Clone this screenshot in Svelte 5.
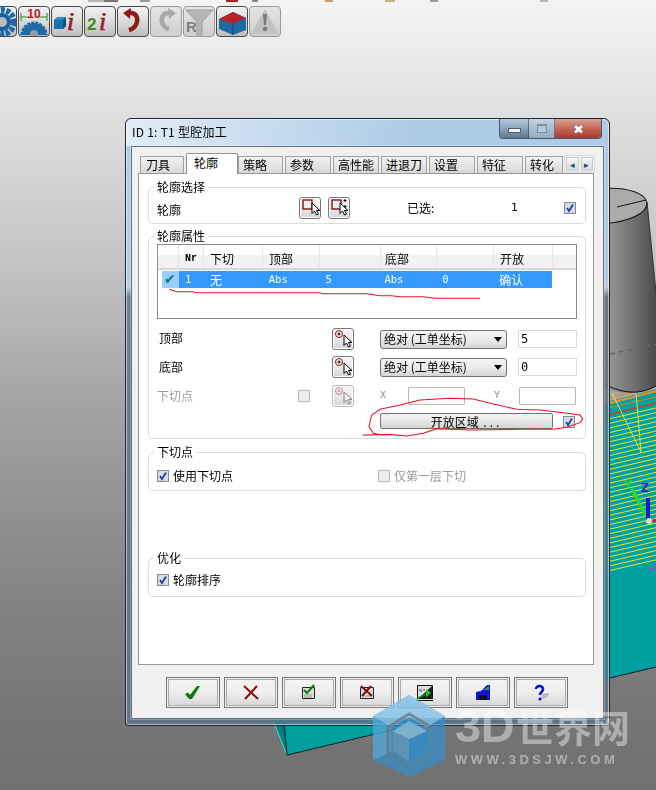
<script>
  const tabs = [
    { t: '刀具', w: 44 }, { t: '轮廓', w: 52, on: true }, { t: '策略', w: 45 }, { t: '参数', w: 46 },
    { t: '高性能', w: 46 }, { t: '进退刀', w: 46 }, { t: '设置', w: 46 }, { t: '特征', w: 46 }, { t: '转化', w: 38 }
  ];
  const cols = ['', 'Nr', '下切', '顶部', '', '底部', '', '开放', ''];
  const row = ['✔', '1', '无', 'Abs', '5', 'Abs', '0', '确认'];
  const mono = new Set([1, 3, 4, 5, 6]);
  const yLines = Array.from({ length: 34 }, (_, i) => 421 + i * 4.6);
  const topMarks = [
    { x: 88, w: 20, c: '#b8b8b8' }, { x: 104, w: 14, c: '#777' }, { x: 140, w: 10, c: '#999' },
    { x: 226, w: 12, c: '#a82020' }, { x: 252, w: 6, c: '#888' }, { x: 325, w: 8, c: '#c9a060' },
    { x: 385, w: 10, c: '#c9b080' }, { x: 430, w: 8, c: '#999' }, { x: 540, w: 8, c: '#b5b5b5' }
  ];
</script>

{#snippet cursor(x, y, dim)}
  <path d="M{x} {y}l0 10.500l2.500-2.500l2 4l2-1l-2-3.500l3.500 0z" fill={dim ? '#eee' : '#fff'} stroke={dim ? '#888' : '#000'} stroke-width="1"/>
{/snippet}

{#snippet check(on)}
  <svg class="ck" width="12" height="12" viewBox="0 0 12 12">
    <rect x=".5" y=".5" width="11" height="11" fill={on ? '#d5dde8' : '#efefef'} stroke={on ? '#8a8a8a' : '#b5b5b5'}/>
    {#if on}<path d="M3 6l2 3l4-6.500" fill="none" stroke="#2a3f9e" stroke-width="1.800"/>{/if}
  </svg>
{/snippet}

{#snippet point(dim)}
  <button class="pick" class:dim>
    <svg width="20" height="20" viewBox="0 0 20 20">
      <circle cx="6" cy="5" r="3.500" fill="none" stroke={dim ? '#d08a8a' : '#a01010'} stroke-width="1"/>
      <path d="M4.500 5h3M6 3.500v3" stroke={dim ? '#999' : '#000'} stroke-width="1"/>
      {@render cursor(11, 6, dim)}
    </svg>
  </button>
{/snippet}

<div class="scene">
  <svg class="model" width="656" height="790" viewBox="0 0 656 790">
    <defs>
      <linearGradient id="cyl" x1="0" x2="1" y1="0" y2="0">
        <stop offset="0" stop-color="#a8a8a8"/><stop offset=".45" stop-color="#a0a0a0"/><stop offset=".8" stop-color="#6c6c6c"/><stop offset="1" stop-color="#4a4a4a"/>
      </linearGradient>
      <clipPath id="fl"><polygon points="600,418 656,405 656,566 600,581"/></clipPath>
    </defs>
    {#each topMarks as m}<rect x={m.x} y="0" width={m.w} height="2" fill={m.c}/>{/each}
    <polygon points="560,418 656,392 656,667 287,755 272,718" fill="#00a0a0"/>
    <polygon points="272,718 284,722 287,755" fill="#007f80"/>
    <path d="M272 718L287 755" stroke="#30e8e8" stroke-width="1"/>
    <path d="M284 722L287 755L656 667" fill="none" stroke="#062020" stroke-width="1"/>
    <path d="M600 400L656 386M600 406L656 392M600 410L656 397" stroke="#d98a10" stroke-width="1"/>
    <path d="M600 404L656 390" stroke="#7f8f20" stroke-width="1"/>
    <path d="M600 417L656 403" stroke="#c84020" stroke-width="1.500"/>
    <g clip-path="url(#fl)">
      {#each yLines as y}<path d="M600 {y}L656 {y - 13}" stroke="#e8e830" stroke-width="1"/>{/each}
    </g>
    <path d="M612 393L641 452M636 393L641 452" stroke="#e8e040" stroke-width="1" fill="none"/>
    <path d="M650 570L656 567" stroke="#e020e0" stroke-width="1.500"/>
    <path d="M558 200L647 202L656 292V386Q632 400 600 386Z" fill="url(#cyl)"/>
    <path d="M656 386Q632 400 600 382" fill="none" stroke="#111" stroke-width="1"/>
    <path d="M647 202L656 292" stroke="#333" stroke-width="1" fill="none"/>
    <ellipse cx="605" cy="206" rx="42" ry="17.500" transform="rotate(-4 605 206)" fill="#aaa" stroke="#111" stroke-width="1"/>
    <path d="M617 207L646 200" stroke="#111" stroke-width="1"/>
    <path d="M610 354L656 344" stroke="#666" stroke-width="1.500" stroke-dasharray="5 4"/>
    <path d="M632 489L648 520" stroke="#20e020" stroke-width="3"/>
    <path d="M648 498V520" stroke="#1818e0" stroke-width="4"/>
    <path d="M653 520l3 1" stroke="#d02020" stroke-width="3"/>
    <circle cx="649" cy="521" r="3" fill="#ddd"/>
    <text x="624" y="489" class="axis y">Y</text>
    <text x="641" y="492" class="axis z">Z</text>
  </svg>

  <div class="toolbar">
    <div class="tb">
      <svg width="30" height="29" viewBox="0 0 30 29"><circle cx="16" cy="15" r="12" fill="none" stroke="#1d6aa8" stroke-width="6" stroke-dasharray="4 1.500"/><circle cx="16" cy="15" r="9" fill="#1d5f9a"/><circle cx="16" cy="15" r="5" fill="#bbb"/></svg>
    </div>
    <div class="tb">
      <svg width="30" height="29" viewBox="0 0 30 29"><path d="M3 28a12 12 0 0 1 24 0" fill="#1d6aa8" stroke="#1d6aa8" stroke-width="3" stroke-dasharray="3 1"/><circle cx="15" cy="27" r="4" fill="#999"/><path d="M2 10h8M20 10h8M2 6v8M28 6v8" stroke="#20902a" stroke-width="1"/><text x="15" y="11" class="ten">10</text></svg>
    </div>
    <div class="tb">
      <svg width="30" height="29" viewBox="0 0 30 29"><path d="M2 13l3-3h9v9l-3 3H2z" fill="#2a8fd0"/><path d="M2 13h9v9H2z" fill="#1a70b0"/><path d="M11 13l3-3v9l-3 3z" fill="#0f4f88"/><text x="15" y="23" class="ii">i</text></svg>
    </div>
    <div class="tb">
      <svg width="30" height="29" viewBox="0 0 30 29"><text x="2" y="23" class="two">2</text><text x="14" y="23" class="ii">i</text></svg>
    </div>
    <div class="tb">
      <svg width="30" height="29" viewBox="0 0 30 29"><path d="M9 6c9-1 11 4 10 9c-1 4-4 7-8 8" fill="none" stroke="#8f1a1a" stroke-width="4.500"/><path d="M13 1L5 6l7 6z" fill="#8f1a1a"/></svg>
    </div>
    <div class="tb off">
      <svg width="30" height="29" viewBox="0 0 30 29"><path d="M21 6c-9-1-11 4-10 9c1 4 3 6 7 7" fill="none" stroke="#a8a8a8" stroke-width="4.500"/><path d="M17 1l8 5l-7 6z" fill="#a8a8a8"/></svg>
    </div>
    <div class="tb off">
      <svg width="30" height="29" viewBox="0 0 30 29"><path d="M2 3h27L18 15v13h-5V15z" fill="#b5b5b5" stroke="#9f9f9f"/><text x="2" y="25" class="rr">R</text></svg>
    </div>
    <div class="tb">
      <svg width="30" height="29" viewBox="0 0 30 29"><path d="M2 12l14-7l13 6v12l-13 5l-14-6z" fill="#1b6aa5"/><path d="M2 12l14-7l13 6l-13 6z" fill="#b8232a"/><path d="M16 17v11" stroke="#0f4a7c"/></svg>
    </div>
    <div class="tb off">
      <svg width="30" height="29" viewBox="0 0 30 29"><path d="M15 2L29 27H1z" fill="#c2c2c2"/><path d="M13 7h4l-1 11h-2z" fill="#7a7a7a"/><circle cx="15" cy="22" r="2.200" fill="#7a7a7a"/></svg>
    </div>
  </div>

  <section class="window">
    <header class="title">
      <span class="caption">ID 1: T1 型腔加工</span>
      <div class="caps">
        <span class="cap min"><i></i></span>
        <span class="cap max"><i></i></span>
        <span class="cap close">✖</span>
      </div>
    </header>
    <div class="client">
      <div class="tabs">
        {#each tabs as tab}
          <div class="tab" class:on={tab.on} style="width:{tab.w}px">{tab.t}</div>
        {/each}
        <div class="spin"><span>◂</span><span>▸</span></div>
      </div>
      <div class="page">
        <div class="group g1">
          <div class="legend">轮廓选择</div>
          <span class="l1">轮廓</span>
          <button class="pick">
            <svg width="20" height="20" viewBox="0 0 20 20"><rect x="3" y="2" width="9" height="9" fill="none" stroke="#800000" stroke-width="1.300"/>{@render cursor(12, 5)}</svg>
          </button>
          <button class="pick second">
            <svg width="20" height="20" viewBox="0 0 20 20"><rect x="3" y="2" width="9" height="9" fill="none" stroke="#800000" stroke-width="1.300"/><path d="M16 1v3M14.500 2.500h3M16 7v3M14.500 8.500h3" stroke="#000"/>{@render cursor(11, 5)}</svg>
          </button>
          <span class="sel">已选:</span>
          <span class="n">1</span>
          {@render check(true)}
        </div>

        <div class="group g2">
          <div class="legend">轮廓属性</div>
          <div class="table">
            <div class="thead">
              {#each cols as c, i}<div class="th c{i}" class:mono={i === 1}>{c}</div>{/each}
            </div>
            <div class="tr">
              {#each row as c, i}
                <div class="td c{i}" class:mono={mono.has(i)} class:tick={i === 0}>{c}</div>
              {/each}
            </div>
          </div>
          <div class="form">
            <span class="lbl in">顶部</span><span></span>{@render point(false)}
            <div class="cell">
              <div class="select">绝对 (工单坐标)<b></b></div><input class="num" value="5"/>
            </div>
            <span class="lbl in">底部</span><span></span>{@render point(false)}
            <div class="cell">
              <div class="select">绝对 (工单坐标)<b></b></div><input class="num" value="0"/>
            </div>
            <span class="lbl grey">下切点</span><span class="ckcell">{@render check(false)}</span>{@render point(true)}
            <div class="cell disabled">
              <span class="xl">X</span><input class="dis" disabled/><span class="yl">Y</span><input class="dis" disabled/>
            </div>
            <div class="open">
              <button class="openbtn">开放区域 <span class="dots">...</span></button>
              {@render check(true)}
            </div>
          </div>
        </div>

        <div class="group g3">
          <div class="legend">下切点</div>
          <div class="chk first">{@render check(true)}<span>使用下切点</span></div>
          <div class="chk grey">{@render check(false)}<span>仅第一层下切</span></div>
        </div>

        <div class="group g4">
          <div class="legend">优化</div>
          <div class="chk">{@render check(true)}<span>轮廓排序</span></div>
        </div>
      </div>

      <footer class="actions">
        <button class="act"><svg width="22" height="18" viewBox="0 0 22 18"><path d="M3 10l3-1.500l2 2.500l7-9h3l-8 13h-3z" fill="#0a7a0a"/></svg></button>
        <button class="act"><svg width="22" height="18" viewBox="0 0 22 18"><path d="M4 2l14 13M17 2L5 15" stroke="#8a0a0a" stroke-width="2" fill="none"/></svg></button>
        <button class="act"><svg width="22" height="18" viewBox="0 0 22 18"><path d="M4.500 3.500h12v11h-12z" fill="#ddd" stroke="#222"/><path d="M6 11h8M6 13h8" stroke="#999"/><path d="M6 6l3 3l7-8" fill="none" stroke="#0a800a" stroke-width="2.200"/></svg></button>
        <button class="act"><svg width="22" height="18" viewBox="0 0 22 18"><path d="M4.500 3.500h13v11h-13z" fill="#ddd" stroke="#222"/><path d="M6 12h9" stroke="#999"/><path d="M5 2l11 10M15 2L6 12" stroke="#8a0a0a" stroke-width="2"/></svg></button>
        <button class="act"><svg width="22" height="18" viewBox="0 0 22 18"><path d="M3.500 1.500h15v13h-15z" fill="#ddd" stroke="#111"/><path d="M18 2L5 14h13z" fill="#222"/><path d="M5 5h3v3H5zM9 5h2v2H9z" fill="#999"/><path d="M12 5l5 4l-5 4z" fill="#1bd01b"/><path d="M2 16.500h17" stroke="#111"/><path d="M3 15l9-5" stroke="#0a800a" stroke-width="2"/></svg></button>
        <button class="act"><svg width="22" height="18" viewBox="0 0 22 18"><path d="M4 8l5-1l6-6h3v15H4z" fill="#1212d8"/><path d="M11 6l6-4v4z" fill="#3a9a3a"/><path d="M7 11h8v5H7z" fill="#111"/></svg></button>
        <button class="act"><svg width="22" height="18" viewBox="0 0 22 18"><path d="M6 5c0-4 7-4 7 0c0 3-3 3-3 6" fill="none" stroke="#1212d0" stroke-width="2.600"/><circle cx="10" cy="15" r="1.600" fill="#1212d0"/><path d="M13 11l5-1l-2 3l-4 1z" fill="none" stroke="#aaa" stroke-width="1.300"/></svg></button>
      </footer>
    </div>
  </section>

  <svg class="ink" width="656" height="790" viewBox="0 0 656 790">
    <g transform="translate(140 235) scale(.3333)"><path d="M88 163L110 170H160L165 173H540L545 176H680L720 182H755L780 185H850L885 190H1020" /></g>
    <g transform="translate(360 330) scale(.3333)"><path d="M8 316L50 314H95L140 318L190 310L232 296L330 300L480 298H580L620 292L660 278L668 266L660 255L610 248L540 240L470 238L400 222L340 207L270 205L180 210L120 225L60 238L35 255L27 290L40 310L70 316" /></g>
  </svg>

  <svg class="logo" width="80" height="90" viewBox="373 693 80 90">
    <polygon points="409,695 445,716 445,760 409,777 373,760 373,716" fill="rgba(50,145,205,.68)"/>
    <polygon points="373,716 409,695 445,716 427,727 409,717 391,727" fill="rgba(185,225,245,.5)"/>
    <polygon points="373,716 391,727 391,752 373,760" fill="rgba(110,190,225,.4)"/>
    <path d="M388 753V727L409 714L431 727" fill="none" stroke="rgba(105,115,125,.75)" stroke-width="3"/>
    <path d="M388 753L409 767" fill="none" stroke="rgba(105,115,125,.5)" stroke-width="3"/>
    <polygon points="393,731 409,721 427,731 427,750 409,761 393,750" fill="rgba(100,150,180,.8)"/>
    <polygon points="409,739 427,731 427,750 409,761" fill="rgba(50,135,195,.85)"/>
    <polygon points="393,731 409,721 427,731 409,739" fill="rgba(130,185,210,.8)"/>
  </svg>
  <div class="mark">
    <div class="big"><span class="lat">3D</span><span class="cjk">世界网</span></div>
    <div class="url">WWW.3DSJW.COM</div>
  </div>
</div>

<style>
  :global(body) { margin: 0; }
  .scene {
    position: relative; width: 656px; height: 790px; overflow: hidden;
    background: linear-gradient(#f4f4f4 0, #e2e2e2 100px, #c4c4c4 260px, #a4a4a4 400px, #868686 580px, #757575 720px, #707070 790px);
    font: 12px/1 "Noto Sans CJK SC", "Liberation Sans", sans-serif;
    color: #000;
  }
  .model { position: absolute; left: 0; top: 0; }
  .axis { font: 700 12px "Liberation Sans", sans-serif; }
  .axis.y { fill: #20e020; }
  .axis.z { fill: #1818e0; font-size: 13px; }

  .toolbar { display: flex; gap: 1px; padding-top: 6px; margin-left: -15px; position: relative; }
  .tb {
    box-sizing: border-box; width: 32px; height: 31px; flex: none; display: flex; align-items: center; justify-content: center;
    border: 1px solid #4a4a4a; border-radius: 4px; background: linear-gradient(#f2f2f2, #d8d8d8 55%, #bdbdbd);
  }
  .tb.off { border-color: #9a9a9a; background: linear-gradient(#e4e4e4, #cfcfcf); }
  .ten { font: 700 12px "Liberation Sans", sans-serif; fill: #c01818; text-anchor: middle; }
  .ii { font: italic 400 26px "Liberation Serif", serif; fill: #9a1a1a; stroke: #9a1a1a; stroke-width: .6px; }
  .two { font: 700 17px "Liberation Sans", sans-serif; fill: #3a8a1a; }
  .rr { font: 700 15px "Liberation Sans", sans-serif; fill: #7f7f7f; }

  .window {
    position: absolute; left: 125px; top: 118px; box-sizing: border-box; width: 485px; height: 608px;
    border: 1px solid #1d2630; border-radius: 6px 6px 3px 3px; padding: 0 5px 6px;
    display: flex; flex-direction: column;
    background: linear-gradient(rgba(165, 200, 232, .88) 0, rgba(180, 208, 232, .9) 160px, rgba(190, 212, 232, .88) 168px, rgba(80, 105, 130, .72) 178px, rgba(90, 115, 140, .72) 100%);
    backdrop-filter: blur(5px);
    box-shadow: inset 0 0 0 1px rgba(255, 255, 255, .55);
  }
  .title {
    height: 27px; flex: none; display: flex; justify-content: space-between; align-items: flex-start; margin: 0 -5px; padding-left: 6px;
    background: linear-gradient(to right, rgba(255, 255, 255, .62), rgba(255, 255, 255, 0) 60%);
    border-radius: 6px 6px 0 0;
  }
  .caption { margin-top: 6px; font-size: 12px; line-height: 14px; letter-spacing: .25px; }
  .caps { display: flex; margin-right: 7px; height: 19px; border: 1px solid #4a5866; border-top: 0; border-radius: 0 0 4px 4px; overflow: hidden; }
  .cap { display: flex; align-items: center; justify-content: center; border-right: 1px solid rgba(40, 50, 60, .5); }
  .min { width: 28px; background: linear-gradient(#b7c9da, #8ba3bb 50%, #5e7890); }
  .min i { display: block; width: 11px; height: 3px; margin-top: 4px; background: #eef2f6; border: 1px solid #4f5f70; }
  .max { width: 25px; background: linear-gradient(#c5d5e3, #a8bdd0 50%, #94abc0); }
  .max i { display: block; width: 8px; height: 6px; border: 1px solid #7a8ea2; border-top-width: 2px; background: #b7c8d8; }
  .close { width: 46px; border: 0; color: #fff; font-size: 13px; background: linear-gradient(#d9a096, #c7675a 50%, #a63a2c); text-shadow: 0 0 1px #333; }

  .client {
    flex: 1; min-height: 0; box-sizing: border-box; background: #f0f0f0; border: 1px solid #66727e;
    box-shadow: 0 0 0 1px rgba(255, 255, 255, .25);
    padding-top: 6px; display: flex; flex-direction: column;
  }
  .tabs { display: flex; gap: 2px; height: 20px; padding-left: 8px; flex: none; align-items: flex-end; position: relative; }
  .tab {
    box-sizing: border-box; height: 17px; padding-left: 4px; white-space: nowrap; overflow: hidden; line-height: 16px; border: 1px solid #a0a0a0; border-bottom: 0;
    background: linear-gradient(#f2f2f2, #d8d8d8);
  }
  .tab:first-child { padding-left: 5px; }
  .tab.on { height: 21px; line-height: 18px; padding-left: 7px; background: #fff; margin: 0 -2px -1px 0; position: relative; z-index: 2; padding-bottom: 2px; border-color: #909090; border-radius: 2px 2px 0 0; }
  .spin { display: flex; gap: 2px; margin-left: -1px; width: 31px; height: 18px; background: #f0f0f0; border: 1px solid #ddd; box-sizing: border-box; padding: 1px; }
  .spin span { width: 13px; font-size: 9px; line-height: 13px; text-align: center; color: #1d3f80; border: 1px solid #ccc; background: linear-gradient(#f4f4f4, #d8d8d8); box-sizing: border-box; }

  .page {
    box-sizing: border-box; width: 456px; height: 492px; margin-left: 6px; flex: none;
    border: 1px solid #979797; background: #fff; padding: 13px 0 0 9px; display: flex; flex-direction: column;
  }
  .group { position: relative; box-sizing: border-box; width: 438px; border: 1px solid #d3dde4; border-radius: 5px; flex: none; }
  .legend { position: absolute; left: 5px; top: -8px; background: #fff; padding: 0 3px; line-height: 14px; }

  .g1 { height: 37px; display: flex; align-items: center; padding: 4px 0 0 8px; margin-bottom: 12px; }
  .l1 { width: 142px; margin-top: 4px; }
  .pick {
    box-sizing: border-box; width: 22px; height: 22px; padding: 0; display: block; border: 1px solid #777; border-radius: 3px;
    background: linear-gradient(#f4f4f4, #e8e8e8 55%, #d4d4d4); box-shadow: inset 0 0 0 1px #fff;
  }
  .pick svg { display: block; }
  .pick.dim { border-color: #bbb; }
  .second { margin-left: 7px; }
  .sel { margin-left: 57px; width: 104px; }
  .n { width: 53px; font: 11px "DejaVu Sans Mono", monospace; }
  .ck { display: block; flex: none; }

  .g2 { height: 203px; padding: 7px 0 0 8px; margin-bottom: 13px; }
  .table { box-sizing: border-box; width: 420px; height: 75px; border: 1px solid #8a8a8a; }
  .thead { display: flex; height: 23px; border-bottom: 2px solid #d8d8d8; background: linear-gradient(#fff 45%, #f2f2f2 45%); }
  .th { box-sizing: border-box; padding: 7px 0 0 6px; border-right: 1px solid #e6e6e6; line-height: 14px; }
  .th.mono { font: 700 10px/14px "Liberation Mono", monospace; padding-left: 6px; }
  .tr { display: flex; height: 17px; margin: 1px 0 0 4px; background: #3399ff; color: #fff; width: 390px; }
  .td { box-sizing: border-box; padding-left: 6px; line-height: 17px; }
  .td.mono { font: 10.500px/17px "DejaVu Sans Mono", monospace; }
  .tick { background: #99ccff; color: #0e7a66; padding-left: 2px; font-size: 14px; font-family: "DejaVu Sans", sans-serif; }
  .c0 { width: 21px; }
  .c1 { width: 25px; }
  .c2 { width: 59px; }
  .c3 { width: 57px; }
  .c4 { width: 61px; }
  .c5 { width: 56px; }
  .th.c5, .td.c5 { padding-left: 4px; }
  .c6 { width: 57px; }
  .c7 { width: 59px; }
  .th.c8 { flex: 1; border-right: 0; }
  .td.c0 { width: 17px; }

  .form { display: grid; grid-template-columns: 141px 34px 48px 197px; grid-template-rows: 22px 23px 22px auto; row-gap: 6px; margin-top: 9px; }
  .lbl { align-self: center; }
  .in { padding-left: 2px; margin-top: -2px; }
  .grey { color: #9a9a9a; }
  .ckcell { padding-top: 5px; }
  .cell { display: flex; gap: 11px; padding-top: 2px; align-items: flex-start; }
  .select {
    box-sizing: border-box; position: relative; width: 127px; height: 19px; padding-left: 3px; line-height: 16px; font-size: 12px; white-space: nowrap;
    border: 1px solid #707070; border-radius: 3px; background: linear-gradient(#f4f4f4, #ebebeb 50%, #d5d5d5);
  }
  .select b { position: absolute; right: 4px; top: 6px; border: 4px solid transparent; border-top: 5px solid #000; border-bottom: 0; }
  input { box-sizing: border-box; height: 18px; margin: 0; padding: 0 2px 0 2px; border-radius: 1px; }
  .num { width: 59px; border: 1px solid #d8d8d8; background: #fff; font: 12px "DejaVu Sans Mono", monospace; color: #000; }
  .disabled { gap: 0; color: #aaa; font: 700 10px/18px "Liberation Mono", monospace; }
  .xl { width: 28px; }
  .yl { padding-left: 29px; width: 25px; }
  .dis { width: 57px; border: 1px solid #b8b8b8; background: #fff; }
  .open { grid-column: 4; display: flex; align-items: flex-start; gap: 10px; }
  .openbtn {
    box-sizing: border-box; width: 173px; height: 16px; padding: 0; font: 12px/13px "Noto Sans CJK SC", sans-serif; color: #000;
    border: 1px solid #707070; border-radius: 2px; background: linear-gradient(#f4f4f4, #e8e8e8 50%, #d4d4d4);
  }
  .dots { letter-spacing: 3px; margin-left: 2px; }
  .open .ck { margin-top: 3px; }

  .g3 { height: 39px; display: flex; align-items: center; padding: 8px 0 0 8px; margin-bottom: 67px; }
  .g4 { height: 39px; display: flex; align-items: center; padding: 4px 0 0 8px; }
  .chk { display: flex; gap: 4px; align-items: center; }
  .first { width: 221px; }

  .actions { display: flex; gap: 4px; margin-top: 12px; padding-left: 34px; }
  .act {
    box-sizing: border-box; width: 54px; height: 31px; padding: 0; display: flex; align-items: center; justify-content: center;
    border: 1px solid #777; background: linear-gradient(#f4f4f4, #eee 50%, #d6d6d6); outline: 1px solid #f0f0f0; outline-offset: -2px;
    box-shadow: inset 0 0 0 1px #f0f0f0, inset 0 0 0 2px #aaa;
  }

  .ink { position: absolute; left: 0; top: 0; pointer-events: none; }
  .ink path { fill: none; stroke: #ee1122; stroke-width: 3.200; }

  .logo { position: absolute; left: 373px; top: 693px; }
  .mark { position: absolute; left: 455px; top: 704px; color: rgba(255, 255, 255, .42); pointer-events: none; }
  .big { display: flex; align-items: center; height: 44px; white-space: nowrap; }
  .lat { font: 700 47px/44px "Liberation Sans", sans-serif; letter-spacing: -.5px; }
  .cjk { font: 700 38px/44px "Noto Sans CJK SC", sans-serif; margin-left: 2px; }
  .url { font: 700 13px/14px "Liberation Sans", sans-serif; letter-spacing: 3.500px; margin-top: 5px; white-space: nowrap; }
</style>
